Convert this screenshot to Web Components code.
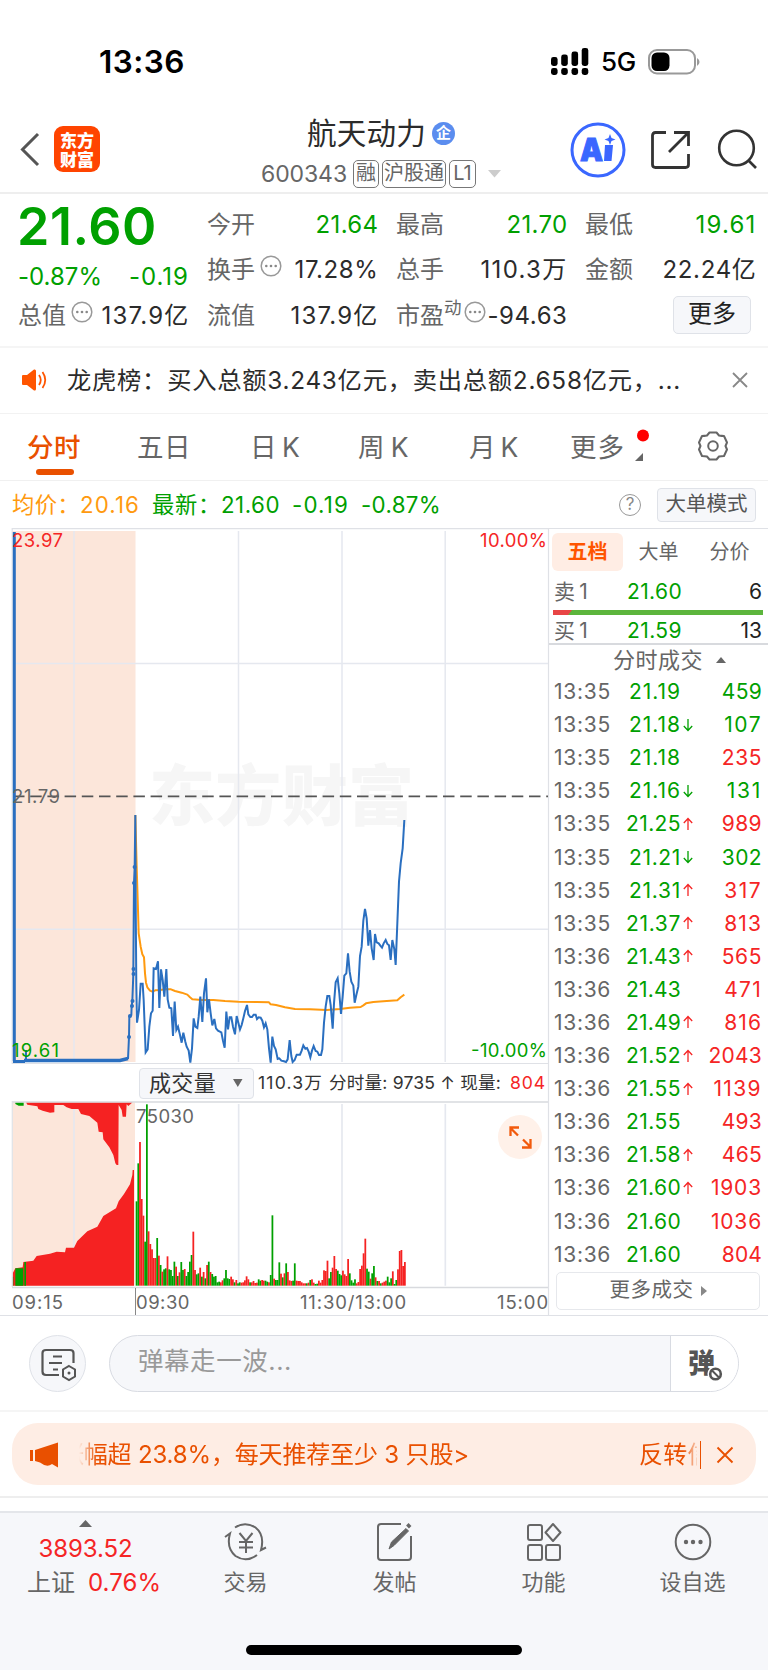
<!DOCTYPE html>
<html lang="zh-CN">
<head>
<meta charset="utf-8">
<title>航天动力 600343</title>
<style>
html,body{margin:0;background:#fff}
body{width:768px;height:1670px;overflow:hidden;font-family:Inter,"Noto Sans CJK SC",sans-serif;color:#333}
</style>
</head>
<body>
<stock-page></stock-page>
<script>
const view=(name,css,html)=>customElements.define(name,class extends HTMLElement{
  constructor(){
    super();
    const t=document.createElement('template');
    t.innerHTML=`<style>*{box-sizing:border-box}svg{display:block;flex:none;overflow:visible}:host{display:block}${css}</style>${typeof html==='function'?html(this):html}`;
    this.attachShadow({mode:'open'}).append(t.content.cloneNode(true));
  }
});
const DOTS=`<svg width="22" height="22" viewBox="0 0 22 22" fill="none" stroke="#999" stroke-width="1.5"><circle cx="11" cy="11" r="9.8"/><g fill="#888" stroke="none"><circle cx="6.3" cy="11" r="1.3"/><circle cx="11" cy="11" r="1.3"/><circle cx="15.7" cy="11" r="1.3"/></g></svg>`;

view('status-bar',`:host{display:flex;height:116px;padding:7px 68px 0 99px;align-items:center;color:#000;font-size:31.5px;font-weight:600;line-height:1}
.r{margin-left:auto;display:flex;align-items:center;font-size:26px;font-weight:500}`,
`<fit-text w="86">13:36</fit-text><div class="r">
<svg width="38" height="28" viewBox="0 0 38 28" style="margin-right:12px"><g><rect x="0" y="9" width="6.6" height="9" rx="2.4"/><rect x="10.2" y="6.5" width="6.6" height="11.5" rx="2.4"/><rect x="20.5" y="3.5" width="6.6" height="14.5" rx="2.4"/><rect x="30.7" y="0" width="6.6" height="18" rx="2.4"/><rect x="0" y="20" width="6.6" height="7" rx="2.4"/><rect x="10.2" y="20" width="6.6" height="7" rx="2.4"/><rect x="20.5" y="20" width="6.6" height="7" rx="2.4"/><rect x="30.7" y="20" width="6.6" height="7" rx="2.4"/></g></svg>
<fit-text w="35">5G</fit-text>
<svg width="52" height="26" viewBox="0 0 52 26" style="margin-left:12px"><rect x="1" y="1" width="46" height="23.5" rx="8" fill="none" stroke="#999" stroke-width="2"/><rect x="3.5" y="3.5" width="18" height="18.5" rx="5.5"/><path d="M49 9q2.5 1.5 2.5 4t-2.500 4z" fill="#999"/></svg></div>`);

view('stock-header',`:host{display:flex;height:78px;border-bottom:2px solid #eee;position:relative}
.back{margin:17px 0 0 20px}
.logo{margin:10px 0 0 14px;width:46px;height:46px;border-radius:9px;background:#ff4400;color:#fff;font:900 17px/19px "Noto Sans CJK SC",sans-serif;display:grid;grid-template-rows:19px 19px;justify-content:center;align-content:center}
.mid{margin-left:161px;width:243px}
.t{display:flex;height:38px;margin-left:46px;font-size:29.6px;line-height:35px;color:#2b2b2b}
.b{margin:6px 0 0 6px;width:23px;height:23px;border-radius:50%;background:#5b8def;color:#fff;font-size:15px;line-height:22px;text-align:center;font-weight:700}
.c{display:flex;align-items:center;height:32px;margin-top:4px;font-size:23px;line-height:1;color:#666}
.tag{border:1.5px solid #777;border-radius:5px;height:28px;line-height:25px;font-size:20px;text-align:center;margin-left:3px}
.ai{margin:6px 0 0 66px}.sh{margin:14px 0 0 25px}.se{margin:13px 0 0 27px}`,
`<svg class="back" width="20" height="33" viewBox="0 0 20 33" fill="none" stroke="#555" stroke-width="3"><path d="M18 1L2.5 16.5L18 32"/></svg>
<div class="logo"><span>东方</span><span>财富</span></div>
<div class="mid"><div class="t"><fit-text w="119">航天动力</fit-text><div class="b">企</div></div>
<div class="c"><fit-text w="86">600343</fit-text><div class="tag" style="width:26px;margin-left:6px">融</div><div class="tag" style="width:64px">沪股通</div><div class="tag" style="width:27px">L1</div><svg width="13" height="8" style="margin-left:12px"><path d="M0 0h13l-6.500 7.500z" fill="#ccc"/></svg></div></div>
<svg class="ai" width="56" height="56" viewBox="0 0 56 56"><circle cx="28" cy="28" r="26" fill="#fff" stroke="#3a67ff" stroke-width="3"/><text x="10" y="39" font-size="32" font-weight="900" font-family="Inter" fill="#3a67ff" stroke="#3a67ff" stroke-width="1" textLength="23" lengthAdjust="spacingAndGlyphs">A</text><path d="M35 23h8l-1.500 16h-7.500z" fill="#3a67ff"/><path d="M40 12l1.500 4 4 1.500-4 1.500-1.500 4-1.500-4-4-1.500 4-1.500z" fill="#3a67ff"/></svg>
<svg class="sh" width="40" height="40" viewBox="0 0 40 40" fill="none" stroke="#333" stroke-width="2.8"><path d="M15 2.5H4.5Q1.5 2.5 1.5 5.5V34.5Q1.5 37.5 4.5 37.500H34.5Q37.5 37.5 37.5 34.5V24"/><path d="M23 2.5H37.5V16M37 3L18 22"/></svg>
<svg class="se" width="40" height="40" viewBox="0 0 40 40" fill="none" stroke="#333" stroke-width="2.6"><circle cx="18.5" cy="19" r="17.3"/><path d="M30.5 31.5L38 39"/></svg>`);

view('quote-cell',`:host{display:flex;height:45.5px;align-items:center;font-size:24px;line-height:1;color:#666}
.v{margin-left:auto;color:var(--c,#2b2b2b);margin-right:-1.5px}`,`<slot></slot><div class="v"><slot name="v"></slot></div>`);
view('quote-board',`:host{display:grid;grid-template-columns:170px 170px 170px 170px;column-gap:19px;height:154px;padding:8px 0 0 18px;border-bottom:2px solid #f5f5f5}
.p{color:#00a000;font-size:52px;font-weight:600;line-height:49px;height:57px;margin-left:-1px}
.ch{display:flex;justify-content:space-between;font-size:24px;line-height:1;height:34px;align-items:center;color:#00a000;padding-top:2px;margin-right:-1px}
.g{--c:#00a000}
svg{margin:-8px 0 0 6px}.btn{justify-self:end;margin:3px 4px 0 0;height:38px;width:78px;border:1.5px solid #dfe2e8;background:#f6f7fa;border-radius:5px;font-size:24px;line-height:34px;text-align:center;color:#222}
sup{font-size:17.5px;align-self:flex-start;margin-top:6px;line-height:1}`,
`<div><div class="p"><fit-text w="140">21.60</fit-text></div><div class="ch"><fit-text w="84">-0.87%</fit-text><fit-text w="60">-0.19</fit-text></div><quote-cell>总值${DOTS.replace('<svg','<svg style="margin-left:5px"')}<fit-text slot="v" w="88">137.9亿</fit-text></quote-cell></div>
<div><quote-cell class="g">今开<fit-text slot="v" w="63">21.64</fit-text></quote-cell><quote-cell>换手${DOTS.replace('<svg','<svg style="margin-left:5px"')}<fit-text slot="v" w="84">17.28%</fit-text></quote-cell><quote-cell>流值<fit-text slot="v" w="88">137.9亿</fit-text></quote-cell></div>
<div><quote-cell class="g">最高<fit-text slot="v" w="61">21.70</fit-text></quote-cell><quote-cell>总手<fit-text slot="v" w="87">110.3万</fit-text></quote-cell><quote-cell>市盈<sup>动</sup>${DOTS.replace('<svg','<svg style="margin-left:2px"')}<fit-text slot="v" w="80">-94.63</fit-text></quote-cell></div>
<div style="display:grid;grid-template-rows:45.5px 45.5px 50px"><quote-cell class="g">最低<fit-text slot="v" w="61">19.61</fit-text></quote-cell><quote-cell>金额<fit-text slot="v" w="94">22.24亿</fit-text></quote-cell><div class="btn">更多</div></div>`);

view('notice-bar',`:host{display:flex;height:66px;align-items:center;padding:0 20px 1px 21px;border-bottom:1.5px solid #f2f2f2;font-size:24.3px;line-height:1;color:#2b2b2b}
fit-text{margin-left:20px}.x{margin-left:auto}`,
`<svg width="26" height="22" viewBox="0 0 26 22"><path d="M1 7q0-1 1-1h4l7-5.500q2-.5 2 1.500v18q0 2-2 1.500L6 16H2q-1 0-1-1z" fill="#ff5500"/><path d="M18 6q3.500 5 0 10M21.500 3q5.500 8 0 16" fill="none" stroke="#ff5500" stroke-width="1.8"/></svg>
<fit-text w="614">龙虎榜：买入总额3.243亿元，卖出总额2.658亿元，...</fit-text>
<svg class="x" width="16" height="16" stroke="#888" stroke-width="1.8"><path d="M1 1L15 15M15 1L1 15"/></svg>`);

view('period-tabs',`:host{display:flex;height:67px;border-bottom:1.5px solid #f0f0f0;font-size:26.5px;line-height:66px;color:#666;padding-left:27px}
.on{color:#e95000;font-weight:500;position:relative;margin-right:56px}
.on::after{content:"";position:absolute;left:9px;top:55px;width:38px;height:6px;border-radius:3px;background:#e95000}
.m svg{position:absolute;left:65px;top:14px}.m{position:relative}`,
`<fit-text w="54" class="on">分时</fit-text><fit-text w="54" style="margin-right:59px">五日</fit-text><fit-text w="49" style="margin-right:59px">日 K</fit-text><fit-text w="50" style="margin-right:61px">周 K</fit-text><fit-text w="48" style="margin-right:53px">月 K</fit-text><span class="m"><fit-text w="55">更多</fit-text><svg width="20" height="34"><circle cx="8" cy="7.5" r="6" fill="red"/><path d="M8 25v8h-8z" fill="#666"/></svg></span>
<svg width="30" height="30" viewBox="0 0 30 30" style="margin:17px 0 0 73px" fill="none" stroke="#666" stroke-width="2"><path d="M11.500 1.5h7l2.500 3q3 .5 5 .5l3 6.500-1.500 3.500 1.500 3.500-3 6.500q-2 0-5 .5l-2.500 3h-7l-2.500-3q-3-.5-5-.5l-3-6.500 1.500-3.500-1.500-3.500 3-6.500q2 0 5-.5z" stroke-linejoin="round"/><circle cx="15" cy="15" r="4.8"/></svg>`);

view('avg-line',`:host{display:flex;height:47px;align-items:center;padding:1px 12px 0 12px;font-size:22.3px;line-height:1;color:#009f00}
.q{margin-left:auto;width:22px;height:22px;border:1.5px solid #999;border-radius:50%;font-size:17px;line-height:19px;text-align:center;color:#888}
.b{margin-left:16px;width:99px;height:34px;border:1.5px solid #dfe2e8;border-radius:4px;background:#f6f7fa;color:#555;font-size:20.5px;line-height:30px;text-align:center}`,
`<span style="color:#ff9a0f;display:flex"><fit-text w="68">均价：</fit-text><fit-text w="60">20.16</fit-text></span><fit-text w="69" style="margin-left:12px">最新：</fit-text><fit-text w="59">21.60</fit-text><fit-text w="57" style="margin-left:12px">-0.19</fit-text><fit-text w="80" style="margin-left:12px">-0.87%</fit-text><div class="q">?</div><div class="b">大单模式</div>`);

const PRICE='57,712 58,650 64,645 65,618 67,603 70,522 70,508 72,248 74,202 76,45 77,300 79,560 81,668 87,630 92,551 98,551 101,600 107,757 113,748 118,680 123,640 128,632 131,505 138,507 144,484 148,624 153,508 158,540 163,590 169,507 173,598 178,623 184,625 189,708 194,605 199,690 204,680 210,705 215,728 220,698 226,725 230,740 236,752 241,788 246,745 251,655 256,680 262,684 266,650 271,590 277,666 282,580 288,535 292,637 297,598 302,640 307,676 313,657 318,685 324,692 334,697 339,722 344,743 349,635 354,688 359,652 364,652 369,680 375,703 380,648 385,668 390,688 395,675 400,655 405,633 411,615 415,643 421,651 426,651 431,644 437,644 441,657 446,652 452,653 457,662 462,682 467,670 472,688 477,745 482,788 487,710 492,738 497,748 503,777 508,775 514,782 522,784 528,786 533,778 539,720 544,768 548,786 554,780 560,764 570,764 575,752 580,736 586,746 591,744 596,755 601,772 606,752 611,738 617,753 622,755 627,765 633,765 637,748 642,668 647,620 652,588 658,588 662,615 668,686 672,610 677,547 683,535 688,580 693,642 698,590 703,527 709,520 714,460 719,515 724,545 730,557 734,608 739,585 745,560 750,468 755,440 760,362 765,327 770,355 775,437 780,390 785,445 791,480 795,402 800,427 806,430 811,437 816,443 821,430 827,420 832,432 837,436 842,480 847,420 853,448 857,495 862,370 867,245 872,190 878,145 883,60';
const AVG='76,45 80,200 84,330 86,400 92,440 97,463 102,472 105,520 108,548 112,562 120,572 127,575 136,571 150,570 165,568 183,568 195,573 215,578 232,584 240,592 247,598 275,600 310,600 345,603 385,605 440,606 477,607 482,613 498,615 525,622 555,627 600,628 650,630 690,627 720,623 752,621 760,616 768,610 790,606 820,604 862,601 873,591 883,584';
view('price-chart',`:host{height:536px}svg text{font-family:Inter,"Noto Sans CJK SC",sans-serif}`,
`<svg width="549" height="536" viewBox="0 528 549 536">
<rect x="13" y="531" width="122.5" height="531" fill="#fce6da"/>
<text x="149" y="820" font-size="66" font-weight="900" fill="#f6f6f6" textLength="265">东方财富</text>
<g stroke="#e5e8ef" stroke-width="1.5" fill="none"><path d="M12 528.7H549M12 1063.5H549M12.2 528V1064M548.5 528V1064" stroke="#dfe1e6" stroke-width="1.2"/><path d="M13 663.5H548M13 929.3H548M74 531V1062M238.5 531V1062M342 531V1062M445.2 531V1062"/></g>
<path d="M13 796.3H548" stroke="#555" stroke-width="1.7" stroke-dasharray="11.5 5.7"/>
<polyline transform="translate(110 800) scale(.33333)" points="${AVG}" fill="none" stroke="#ff9a0f" stroke-width="6" stroke-linejoin="round"/>
<path d="M14.3 532V1061M13 1061.5H25" stroke="#2a6fc0" stroke-width="3" fill="none"/><path d="M24 1060.5H120L128 1058.5" stroke="#2a6fc0" stroke-width="3.5" fill="none"/><path d="M26 1050V1060M128 1059L129 1037" stroke="#2a6fc0" stroke-width="2"/>
<polyline transform="translate(110 800) scale(.33333)" points="${PRICE}" fill="none" stroke="#2a6fc0" stroke-width="6"/>
<g fill="#2a6fc0"><circle cx="129" cy="1037" r="2"/><circle cx="130" cy="1016" r="2"/><circle cx="132" cy="1006" r="2"/><circle cx="132.5" cy="1001" r="2"/><circle cx="133.5" cy="974" r="2"/><circle cx="133.5" cy="969" r="2"/><circle cx="134" cy="883" r="2"/><circle cx="134.6" cy="867" r="2"/></g>
<g font-size="18.5"><text x="12" y="547" fill="#f52525" textLength="51">23.97</text><text x="12" y="802.5" fill="#666" textLength="48">21.79</text><text x="12" y="1057" fill="#00a000" textLength="47">19.61</text><text x="547" y="547" text-anchor="end" fill="#f52525" textLength="67">10.00%</text><text x="547" y="1057" text-anchor="end" fill="#00a000" textLength="76">-10.00%</text></g></svg>`);

const VOL='g424 g310 r246 r417 r467 g545 g133 r514 r552 r568 r594 r594 g534 r587 g615 r635 g628 g625 r589 g628 g630 g648 g605 r620 g648 r637 g606 g630 r627 g648 g636 g605 g585 r515 r630 g643 g640 r623 g650 r636 g655 r615 g605 r636 g642 g650 g648 g667 g665 r667 r661 g655 g630 g655 g657 r650 r658 g667 r660 g670 g667 r668 r667 r661 r649 r658 g667 r667 r663 r669 r668 g658 g662 r660 r662 g662 g665 r667 g645 g466 r656 g660 g660 g607 r641 g652 r640 g610 r636 r661 r663 g662 g610 r662 r663 r663 r667 r670 r670 g670 r668 g660 r658 r668 g672 g671 r662 r668 r660 r631 r633 r602 g655 g636 r623 r588 r627 g632 g642 g646 r632 r643 r648 r597 g640 g661 g668 g658 r670 r666 r627 r617 r580 r536 g626 g635 r656 g640 g618 r652 g663 r663 g670 r668 r665 r662 g650 g667 g655 r634 g672 g660 r628 r573 r570 r618 r606'.split(' ');
view('volume-chart',`:host{height:251px}
.bar{display:flex;height:37px;align-items:center;padding:1px 3px 0 139px;font-size:17.6px;line-height:1;color:#333}
.sel{display:flex;align-items:center;width:115px;height:31px;border:1.5px solid #dfe2e8;border-radius:4px;background:#f6f7fa;font-size:22px;padding-left:9px;margin-right:4px}
.ax{display:flex;height:28px;font-size:18.5px;line-height:31px;color:#666;padding-left:12px}
svg text{font-family:Inter,sans-serif}`,
`<div class="bar"><div class="sel"><fit-text w="67">成交量</fit-text><svg width="10" height="8" style="margin-left:17px"><path d="M0 0h9.500l-4.700 8z" fill="#666"/></svg></div><fit-text w="65">110.3万</fit-text><fit-text w="182" style="margin-left:1px">&nbsp;分时量: 9735 ↑ 现量:&nbsp;</fit-text><fit-text w="36" style="color:#f52525;margin-left:auto">804</fit-text></div>
<svg width="549" height="186" viewBox="0 1101 549 186"><g transform="translate(0 1060) scale(.33333)">
<rect x="38" y="127" width="367" height="550" fill="#fce6da"/>
<g stroke="#e5e8ef" stroke-width="5"><path d="M222 132V677M716 132V677M1026 132V677M1336 132V677"/></g>
<path d="M36 677L38 640L46 625L68 622L70 606L100 602L110 588L150 581L170 575L195 577L198 563L222 563L232 543L262 514L292 500L310 468L348 445L356 424L372 402L390 373L397 345L398 330H402V677z" fill="#f52222"/>
<path d="M36 677V650H40V677zM46 677V625H70V677zM73 677V606H78V677zM46 127V132L56 137H71V127z" fill="#00a000"/>
<path d="M78 127L82 134 112 139 115 147 128 152 150 158 163 157V135L190 135 200 142 215 147 235 147 243 162 268 168 292 188 296 215 308 217 310 238 328 262 340 285 346 310 350 315H355L356 135 365 150 368 170H378L380 133 385 138 398 127z" fill="#f52222"/>
${VOL.map((v,i)=>`<rect x="${(407+i*5.16).toFixed(1)}" y="${v.slice(1)}" width="5.3" height="${677-v.slice(1)}" fill="${v[0]=='g'?'#00a000':'#f52222'}"/>`).join('')}
</g>
<path d="M12 1102H549M12 1287.5H549" stroke="#d8dade" stroke-width="1.5"/><path d="M12.3 1101V1287M548.5 1064V1315" stroke="#dfe1e6" stroke-width="1.2"/><path d="M135.5 1288V1315" stroke="#888"/>
<text x="136" y="1123" font-size="18.5" fill="#666" textLength="58">75030</text>
<circle cx="520" cy="1137" r="22" fill="#fff1e9"/><path d="M518 1135.5L511 1128.5M510.5 1136V1127.5H519M523 1139.5L530 1146.5M530.5 1139V1147.5H522" fill="none" stroke="#f25a0c" stroke-width="2.3"/></svg>
<div class="ax"><fit-text w="52">09:15</fit-text><fit-text w="54" style="margin-left:72px">09:30</fit-text><fit-text w="107" style="margin-left:110px">11:30/13:00</fit-text><fit-text w="52" style="margin-left:90px">15:00</fit-text></div>`);

view('trade-row',`:host{display:flex;height:33.1px;align-items:center;font-size:21px;line-height:1;color:#666;padding:0 6px 0 5px}
.p{width:56px;text-align:right;color:#00a000;margin-left:14px}.a{width:14px;margin-left:1px}.v{margin-left:auto}`,
h=>{const [t,p,d,v,c]=h.getAttribute('row').split(',');
const col=d=='u'?'#f52525':'#00a000';
return `<fit-text w="57">${t}</fit-text><div class="p"><fit-text w="${p.match(/1/g).length>1?52:55}">${p}</fit-text></div><div class="a">${d?`<svg width="12" height="14" viewBox="0 0 12 14" fill="none" stroke="${col}" stroke-width="1.3"><path d="${d=='u'?'M6 13V1.5M1.8 6L6 1.5L10.2 6':'M6 1V12.5M1.8 8L6 12.5L10.2 8'}"/></svg>`:''}</div><div class="v" style="color:${c=='r'?'#f52525':'#00a000'}"><fit-text w="${v.length*13.4-(v.match(/1/g)||[]).length*2.5}">${v}</fit-text></div>`});
const ROWS='13:35,21.19,,459,g|13:35,21.18,d,107,g|13:35,21.18,,235,r|13:35,21.16,d,131,g|13:35,21.25,u,989,r|13:35,21.21,d,302,g|13:35,21.31,u,317,r|13:35,21.37,u,813,r|13:36,21.43,u,565,r|13:36,21.43,,471,r|13:36,21.49,u,816,r|13:36,21.52,u,2043,r|13:36,21.55,u,1139,r|13:36,21.55,,493,r|13:36,21.58,u,465,r|13:36,21.60,u,1903,r|13:36,21.60,,1036,r|13:36,21.60,,804,r'.split('|');
view('order-book',`:host{border-top:1.5px solid #dfe1e6}
.tabs{display:flex;height:44px;padding:4px 0 0 3px;font-size:20px;line-height:38px;color:#666;text-align:center}
.tabs div{width:71px}.tabs .on{background:#ffede4;border-radius:6px;color:#ff5500;font-weight:700;height:38px}
.q{display:flex;height:37px;align-items:center;font-size:21px;line-height:1;color:#666;padding:0 6px 0 5px}
.q span{width:73px}.q b{font-weight:400;color:#00a000}.q i{font-style:normal;margin-left:auto;color:#222}
.s{display:flex;height:5px;margin:0 5px 0 4px;background:#5cb53c}.s i{width:19px;background:#e84545;clip-path:polygon(0 0,100% 0,80% 100%,0 100%)}
.h{display:flex;height:32px;border-top:2px solid #d8dade;align-items:center;font-size:22px;line-height:1;color:#666;gap:13px;padding-left:64px}
.more{display:flex;align-items:center;justify-content:center;gap:7px;margin:0 8px 0 7px;height:38px;border:1.5px solid #e6e8ec;border-radius:5px;font-size:20.5px;color:#666;line-height:1}`,
`<div class="tabs"><div class="on">五档</div><div>大单</div><div>分价</div></div>
<div class="q"><span><fit-text w="33">卖 1</fit-text></span><b><fit-text w="55">21.60</fit-text></b><i>6</i></div><div class="s"><i></i></div>
<div class="q" style="height:28px;padding-top:2px"><span><fit-text w="33">买 1</fit-text></span><b><fit-text w="55">21.59</fit-text></b><i>13</i></div>
<div class="h"><fit-text w="90">分时成交</fit-text><svg width="10" height="6"><path d="M0 6h10l-5-6z" fill="#666"/></svg></div>
<div style="height:596.5px">${ROWS.map(r=>`<trade-row row="${r}"></trade-row>`).join('')}</div>
<div class="more"><fit-text w="84">更多成交</fit-text><svg width="6" height="10"><path d="M0 0v10l6-5z" fill="#888"/></svg></div>`);

view('danmu-bar',`:host{display:flex;height:97px;padding:19px 0 0 29px;border-top:1.5px solid #dfe1e6;border-bottom:2px solid #f5f5f5}
.c{width:57px;height:57px;border:1.5px solid #dfe2e8;border-radius:50%;background:#f6f7fa;padding:13px 0 0 11px}
.i{display:flex;margin-left:23px;width:630px;height:57px;border:1.5px solid #d8dbe2;border-radius:29px;background:#f6f7fa;font-size:25.5px;line-height:50px;color:#999;padding-left:28px}
.r{margin-left:auto;width:68px;border-left:1.5px solid #d8dbe2;background:#fff;border-radius:0 28px 28px 0}svg text{font-family:"Noto Sans CJK SC",sans-serif}`,
`<div class="c"><svg width="36" height="34" viewBox="0 0 36 34" fill="none" stroke="#555" stroke-width="2.2"><path d="M18 26H5Q1.5 26 1.5 22.5V4Q1.5 1 5 1H29Q32.5 1 32.5 4V14"/><path d="M12 7.5H21M8 14H21M12 20.5H17M28 17L34 20.5V27.5L28 31L22 27.5V20.5z" stroke-width="2"/><circle cx="28" cy="24" r="1.5" fill="#555" stroke="none"/></svg></div>
<div class="i"><fit-text w="154">弹幕走一波...</fit-text><div class="r"><svg width="68" height="54"><text x="17" y="37" font-size="27" font-weight="900" fill="#555">弹</text><circle cx="44.5" cy="38" r="8" fill="#fff"/><circle cx="44.5" cy="38" r="5.3" fill="none" stroke="#555" stroke-width="2.6"/><path d="M41 34.500l7 7" stroke="#555" stroke-width="2"/></svg></div></div>`);

view('promo-strip',`:host{height:86px;padding:11px 12px 0;border-bottom:2px solid #eee}
.b{display:flex;align-items:center;height:62px;border-radius:26px;background:#feede4;color:#e95000;font-size:24px;line-height:1;padding:1px 23px 0 18px}
.m{width:393px;margin-left:19px;overflow:hidden;display:flex;justify-content:flex-end;mask-image:linear-gradient(90deg,transparent,#000 18px);height:36px;align-items:center}
.n{margin-left:170px;width:58px;overflow:hidden;height:36px;display:flex;align-items:center;mask-image:linear-gradient(90deg,#000 44px,transparent 62px)}
.l{width:1.5px;height:28px;background:#e95000;margin:0 16px 0 3px}`,
`<div class="b"><svg width="30" height="26" viewBox="0 0 30 26" fill="#e95000"><path d="M0 8h3v11h-3zM5 8L28 0.5V25.5L22 22Q17 26 10 20.5L5 19z"/></svg>
<div class="m"><fit-text w="409">涨幅超 23.8%，每天推荐至少 3 只股&gt;</fit-text></div><div class="n"><fit-text w="73">反转信</fit-text></div><div class="l"></div><svg width="16" height="16" stroke="#e95000" stroke-width="1.9"><path d="M.5 .5L15.5 15.5M15.5 .5L.5 15.5"/></svg></div>`);

view('nav-item',`:host{width:149px;display:flex;flex-direction:column;align-items:center;font-size:22px;line-height:1;color:#666;padding-top:9px}
svg{margin-bottom:9px}`,h=>`<svg width="44" height="40" viewBox="0 0 44 40" fill="none" stroke="#666" stroke-width="2">${ICONS[h.getAttribute('icon')]}</svg><slot></slot>`);
const ICONS={
 trade:'<path d="M11 5.5Q21-1 31.5 5.5Q41 13 37 28L42 25.5M33 33Q22 41 11.5 34Q2 26 6 11.5L1 15"/><path d="M15.5 11L22 19L28.5 11M22 19V31M15 20H29M15 25.5H29"/>',
 post:'<path d="M28 2H8Q5 2 5 5V35Q5 38 8 38H35Q38 38 38 35V14" /><path d="M16 27L18.5 20L33 6.5L35.5 9L21 23.5z" fill="#666" stroke-width="1"/><path d="M34.5 5L37 2.5" stroke-width="4"/>',
 grid:'<rect x="6" y="3" width="14" height="15" rx="2"/><rect x="6" y="23" width="14" height="15" rx="2"/><rect x="24" y="23" width="14" height="15" rx="2"/><path d="M31 2L38.5 10.5L31 19L23.5 10.5z" stroke-linejoin="round"/>',
 more:'<circle cx="22" cy="20" r="17.3"/><g fill="#666" stroke="none"><circle cx="15" cy="20" r="2.2"/><circle cx="22" cy="20" r="2.2"/><circle cx="29.5" cy="20" r="2.2"/></g>'};
view('bottom-nav',`:host{margin-top:13px;height:160px;background:#f6f7fa;border-top:2px solid #e4e6ea}
.n{display:flex;height:132px}.x{width:171px;text-align:center;font-size:24px;line-height:1;color:#f52525;display:flex;flex-direction:column;align-items:center;padding-top:7px}
.x span{color:#666}.h{width:276px;height:10px;border-radius:5px;background:#000;margin-left:246px}`,
`<div class="n"><div class="x"><svg width="13" height="7"><path d="M0 7h13l-6.500-7z" fill="#666"/></svg><fit-text w="94" style="margin:10px 0 0 0">3893.52</fit-text><div style="display:flex;gap:13px;margin:10px 0 0 17px"><span>上证</span><fit-text w="73">0.76%</fit-text></div></div>
<nav-item icon="trade">交易</nav-item><nav-item icon="post">发帖</nav-item><nav-item icon="grid">功能</nav-item><nav-item icon="more">设自选</nav-item></div><div class="h"></div>`);

view('stock-page',`.main{display:grid;grid-template-columns:549px 219px;height:787px}`,
`<status-bar></status-bar><stock-header></stock-header><quote-board></quote-board><notice-bar></notice-bar><period-tabs></period-tabs><avg-line></avg-line>
<div class="main"><div><price-chart></price-chart><volume-chart></volume-chart></div><order-book></order-book></div>
<danmu-bar></danmu-bar><promo-strip></promo-strip><bottom-nav></bottom-nav>`);

/* Inline label whose tracking is adjusted so that it fills the width given in w. */
customElements.define('fit-text',class extends HTMLElement{
  constructor(){super();this.attachShadow({mode:'open'}).innerHTML='<style>:host{display:inline-block;white-space:nowrap;flex:none}</style><slot></slot>'}
  connectedCallback(){
    const w=+this.getAttribute('w'),n=[...this.textContent].length;
    if(w&&n)this.style.letterSpacing=((w-this.getBoundingClientRect().width)/n).toFixed(3)+'px';
  }
});
</script>
</body>
</html>
